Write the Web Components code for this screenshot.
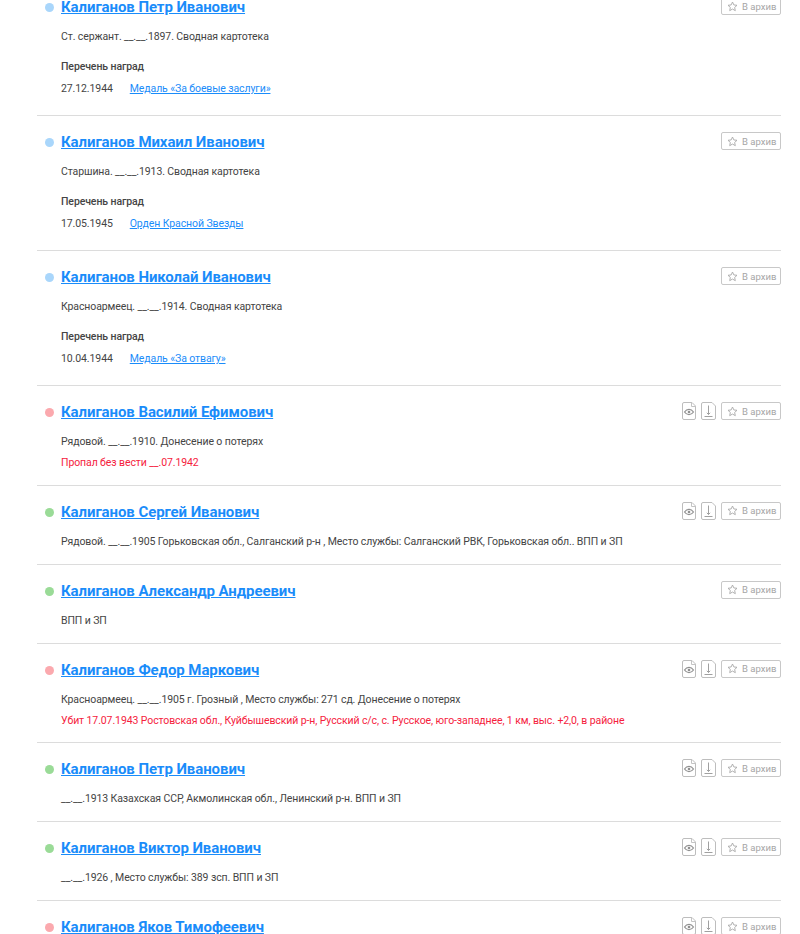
<!DOCTYPE html>
<html lang="ru">
<head>
<meta charset="utf-8">
<title>Калиганов</title>
<style>
  html, body { margin: 0; height: 934px; overflow: hidden; background: #fff; }
  body { font-family: Roboto, "Noto Sans", sans-serif; }
  person-list { margin-top: -19px; }
</style>
</head>
<body>
<person-list>
  <person-row name="Калиганов Петр Иванович" status="info">
    <span slot="info">Ст. сержант. __.__.1897. Сводная картотека</span>
    <award-line date="27.12.1944" title="Медаль «За боевые заслуги»"></award-line>
  </person-row>
  <person-row name="Калиганов Михаил Иванович" status="info">
    <span slot="info">Старшина. __.__.1913. Сводная картотека</span>
    <award-line date="17.05.1945" title="Орден Красной Звезды"></award-line>
  </person-row>
  <person-row name="Калиганов Николай Иванович" status="info">
    <span slot="info">Красноармеец. __.__.1914. Сводная картотека</span>
    <award-line date="10.04.1944" title="Медаль «За отвагу»"></award-line>
  </person-row>
  <person-row name="Калиганов Василий Ефимович" status="lost" docs>
    <span slot="info">Рядовой. __.__.1910. Донесение о потерях</span>
    <span slot="fate">Пропал без вести __.07.1942</span>
  </person-row>
  <person-row name="Калиганов Сергей Иванович" status="vet" docs>
    <span slot="info">Рядовой. __.__.1905 Горьковская обл., Салганский р-н , Место службы: Салганский РВК, Горьковская обл.. ВПП и ЗП</span>
  </person-row>
  <person-row name="Калиганов Александр Андреевич" status="vet">
    <span slot="info">ВПП и ЗП</span>
  </person-row>
  <person-row name="Калиганов Федор Маркович" status="lost" docs>
    <span slot="info">Красноармеец. __.__.1905 г. Грозный , Место службы: 271 сд. Донесение о потерях</span>
    <span slot="fate">Убит 17.07.1943 Ростовская обл., Куйбышевский р-н, Русский с/с, с. Русское, юго-западнее, 1 км, выс. +2,0, в районе</span>
  </person-row>
  <person-row name="Калиганов Петр Иванович" status="vet" docs>
    <span slot="info">__.__.1913 Казахская ССР, Акмолинская обл., Ленинский р-н. ВПП и ЗП</span>
  </person-row>
  <person-row name="Калиганов Виктор Иванович" status="vet" docs>
    <span slot="info">__.__.1926 , Место службы: 389 зсп. ВПП и ЗП</span>
  </person-row>
  <person-row name="Калиганов Яков Тимофеевич" status="lost" docs></person-row>
</person-list>

<script>
class PersonList extends HTMLElement {
  constructor() {
    super();
    this.attachShadow({ mode: 'open' });
    this.shadowRoot.innerHTML = `
      <style>
        :host { display: block; box-sizing: border-box; padding: 0 19px 0 37px; }
      </style>
      <slot></slot>
    `;
  }
}

class DocIcon extends HTMLElement {
  constructor() {
    super();
    this.attachShadow({ mode: 'open' });
    const view = this.getAttribute('kind') === 'view';
    const glyph = view
      ? '<path d="M2.500 10c1.200-1.700 2.800-2.600 4.500-2.600s3.300.9 4.500 2.600c-1.200 1.700-2.800 2.600-4.500 2.600s-3.300-.9-4.500-2.600z" fill="none" stroke="#8f8f8f" stroke-width="1.200"/><circle cx="7" cy="10" r="1.300" fill="#8f8f8f"/>'
      : '<path d="M7.500 3.500v9M5.800 10.800l1.700 1.700 1.700-1.700M3.500 14.500h8" fill="none" stroke="#a0a0a0"/>';
    const w = view ? 14 : 15;
    const fold = view ? `<path d="M${w - 4.500} .5v4h4" fill="none" stroke="#c4c4c4"/>` : '';
    this.shadowRoot.innerHTML = `
      <style>
        :host { display: block; height: 18px; }
        svg { display: block; }
      </style>
      <svg width="${w}" height="18" viewBox="0 0 ${w} 18">
        <path d="M.5 2A1.500 1.500 0 0 1 2 .5h${w - 6}l3.500 3.500v12A1.500 1.500 0 0 1 ${w - 2} 17.500H2A1.500 1.500 0 0 1 .5 16z" fill="#fff" stroke="#bdbdbd"/>
        ${fold}
        ${glyph}
      </svg>
    `;
  }
}

class ArchiveButton extends HTMLElement {
  constructor() {
    super();
    this.attachShadow({ mode: 'open' });
    this.shadowRoot.innerHTML = `
      <style>
        :host {
          display: flex; align-items: center; box-sizing: border-box;
          width: 60px; height: 18px; padding-left: 5px; gap: 4px;
          border: 1px solid #c8c8c8; border-radius: 2px;
          font-size: 9.5px; color: #a6a6a6; white-space: nowrap;
        }
        svg { flex-shrink: 0; }
      </style>
      <svg width="11" height="11" viewBox="0 0 11 11"><path d="M5.500 1l1.350 2.950 3.150.35-2.350 2.150.65 3.200-2.800-1.600-2.800 1.600.65-3.200L1 4.300l3.150-.35z" fill="none" stroke="#a8a8a8" stroke-width=".9"/></svg>
      <span>В архив</span>
    `;
  }
}

class AwardLine extends HTMLElement {
  constructor() {
    super();
    this.attachShadow({ mode: 'open' });
    this.shadowRoot.innerHTML = `
      <style>
        :host { display: block; font-size: 10.5px; letter-spacing: -0.1px; color: #444; padding-bottom: 4px; }
        .head { font-weight: 500; color: #444; height: 22px; line-height: 16px; margin-top: 14px; }
        .row { display: flex; gap: 17px; line-height: 16px; }
        a { color: #1a8cfa; text-decoration: underline; }
      </style>
      <div class="head">Перечень наград</div>
      <div class="row"><span>${this.getAttribute('date')}</span><a href="#">${this.getAttribute('title')}</a></div>
    `;
  }
}

class PersonRow extends HTMLElement {
  constructor() {
    super();
    this.attachShadow({ mode: 'open' });
    const colors = { info: '#a9d6fb', lost: '#fba9ae', vet: '#9adb97' };
    const name = this.getAttribute('name') || '';
    const dot = colors[this.getAttribute('status')] || 'transparent';
    const docs = this.hasAttribute('docs')
      ? '<doc-icon kind="view"></doc-icon><doc-icon kind="save"></doc-icon>' : '';
    const hasFate = this.querySelector('[slot=fate]');
    this.shadowRoot.innerHTML = `
      <style>
        :host {
          display: block; box-sizing: border-box; padding: 17px 0 14px 24px;
          border-bottom: 1px solid #dcdcdc; position: relative;
        }
        :host(:last-child) { border-bottom: 0; }
        .dot { position: absolute; left: 8px; top: 22px; width: 9px; height: 9px; border-radius: 50%; background: ${dot}; }
        .top { display: flex; justify-content: space-between; align-items: flex-start; height: 18px; margin-top: -1px; }
        h3 { margin: 1px 0 0; font-size: 15px; letter-spacing: -0.08px; line-height: 18px; font-weight: 700; white-space: nowrap; }
        h3 a { color: #1a8cfa; text-decoration: underline; }
        .actions { display: flex; gap: 5px; }
        .info { font-size: 10.5px; letter-spacing: -0.1px; line-height: 16px; color: #444; margin-top: 14px; }
        .fate { font-size: 10.5px; letter-spacing: -0.1px; line-height: 16px; color: #f5213d; margin: 5px 0 -0.5px; }
      </style>
      <span class="dot"></span>
      <div class="top">
        <h3><a href="#">${name}</a></h3>
        <div class="actions">${docs}<archive-button></archive-button></div>
      </div>
      <div class="info"><slot name="info"></slot></div>
      ${hasFate ? '<div class="fate"><slot name="fate"></slot></div>' : ''}
      <slot></slot>
    `;
  }
}

customElements.define('person-list', PersonList);
customElements.define('doc-icon', DocIcon);
customElements.define('archive-button', ArchiveButton);
customElements.define('award-line', AwardLine);
customElements.define('person-row', PersonRow);
</script>
</body>
</html>
